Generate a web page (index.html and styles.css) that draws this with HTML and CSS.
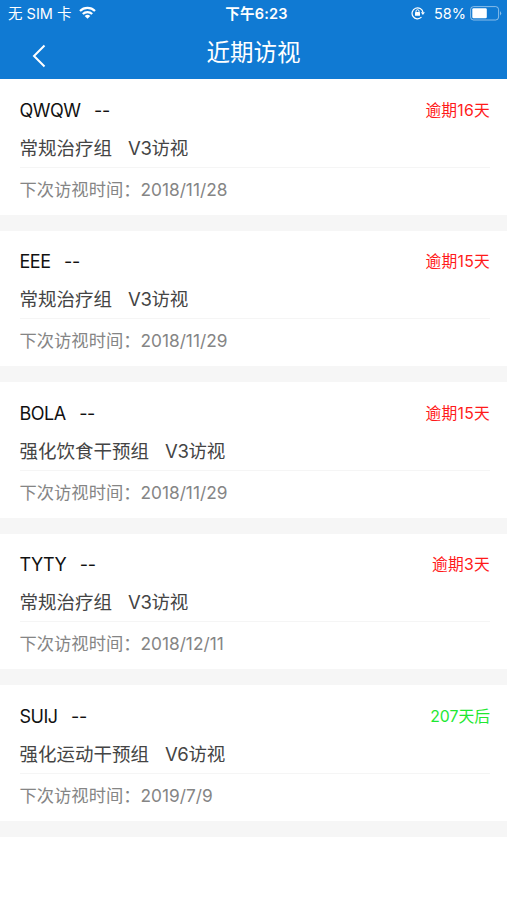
FILE: index.html
```html
<!DOCTYPE html>
<html lang="zh-CN">
<head>
<meta charset="utf-8">
<title>近期访视</title>
<link rel="stylesheet" href="styles.css">
</head>
<body>
<header>
  <div class="status">
    <div class="carrier"><span>无 SIM 卡</span>
      <svg width="17" height="13" viewBox="0 0 17 13"><g fill="none" stroke="#fff" stroke-width="2.2"><path d="M1 5a10.6 10.6 0 0 1 15 0"/><path d="M3.8 8a6.7 6.7 0 0 1 9.4 0"/></g><path d="M8.5 12.8L5.7 10a4 4 0 0 1 5.6 0z" fill="#fff"/></svg>
    </div>
    <div class="time">下午6:23</div>
    <div class="power">
      <svg class="lock" width="14" height="14" viewBox="0 0 14 14" fill="none" stroke="#fff" stroke-width="1.2"><path d="M10.5 11.2A5.5 5.5 0 1 1 12 6.4"/><path d="M9.9 6.2h4l-2 2.8z" fill="#fff" stroke="none"/><path d="M5 6.5V5.2a1.5 1.5 0 0 1 3 0v1.3" stroke-width="1"/><rect x="4" y="6" width="5" height="3.8" rx=".4" fill="#fff" stroke="none"/></svg>
      <span>58%</span>
      <svg class="battery" width="32" height="15" viewBox="0 0 32 15"><rect x=".6" y=".6" width="28" height="13.4" rx="3" fill="none" stroke="#fff" stroke-opacity=".5"/><rect x="2.3" y="2.3" width="14.5" height="10" rx="1.2" fill="#fff"/><path d="M30 5q2.4 2.3 0 4.6z" fill="#fff" opacity=".5"/></svg>
    </div>
  </div>
  <nav class="nav">
    <svg class="back" width="16" height="24" viewBox="0 0 16 24"><path d="M13.5 1.5L3 12 13.5 22.5" fill="none" stroke="#fff" stroke-width="2"/></svg>
    <h1>近期访视</h1>
  </nav>
</header>
<main>
  <section class="card"><div class="top"><span class="name">QWQW</span><span class="dash">--</span><span class="tag">逾期16天</span></div><div class="group"><span>常规治疗组</span><span>V3访视</span></div><div class="next"><span>下次访视时间：</span><span class="date">2018/11/28</span></div></section>
  <section class="card"><div class="top"><span class="name">EEE</span><span class="dash">--</span><span class="tag">逾期15天</span></div><div class="group"><span>常规治疗组</span><span>V3访视</span></div><div class="next"><span>下次访视时间：</span><span class="date">2018/11/29</span></div></section>
  <section class="card"><div class="top"><span class="name">BOLA</span><span class="dash">--</span><span class="tag">逾期15天</span></div><div class="group"><span>强化饮食干预组</span><span>V3访视</span></div><div class="next"><span>下次访视时间：</span><span class="date">2018/11/29</span></div></section>
  <section class="card"><div class="top"><span class="name">TYTY</span><span class="dash">--</span><span class="tag">逾期3天</span></div><div class="group"><span>常规治疗组</span><span>V3访视</span></div><div class="next"><span>下次访视时间：</span><span class="date">2018/12/11</span></div></section>
  <section class="card"><div class="top"><span class="name">SUIJ</span><span class="dash">--</span><span class="tag later">207天后</span></div><div class="group"><span>强化运动干预组</span><span>V6访视</span></div><div class="next"><span>下次访视时间：</span><span class="date">2019/7/9</span></div></section>
</main>
</body>
</html>
```
FILE: styles.css
```css
* { box-sizing: border-box; }
body { margin: 0; background: #fff; font-family: Inter, "Noto Sans CJK SC", sans-serif; }
header { height: 79px; background: #107ad3; color: #fff; }
.status { height: 27px; padding: 0 2px 0 8px; display: grid; grid-template-columns: 1fr auto 1fr; align-items: center; font-size: 14.5px; line-height: 27px; }
.carrier, .power { display: flex; align-items: center; gap: 8px; white-space: nowrap; }
.carrier svg { margin-bottom: 2px; }
.power { justify-content: flex-end; margin-right: 3px; gap: 4px; }
.lock { margin-right: 5px; margin-bottom: 1px; }
.time { font-weight: 600; letter-spacing: .25px; }
.nav { height: 52px; display: grid; grid-template-columns: 60px 1fr 60px; align-items: center; }
.back { margin: 6px 0 0 31px; }
h1 { margin: 0; font-size: 23.5px; font-weight: 400; line-height: 51px; height: 52px; text-align: center; }
.card { height: 151.5px; padding: 14.6px 17px 0 19.5px; border-bottom: 16px solid #f6f6f6; white-space: nowrap; }
.top { display: flex; height: 32px; line-height: 33px; font-size: 18px; color: #111; }
.name { letter-spacing: -.5px; }
.dash { margin-left: 13.5px; letter-spacing: -.3px; }
.tag { margin-left: auto; font-size: 15.8px; letter-spacing: .2px; color: #ff1a1a; }
.tag.later { color: #1fe832; letter-spacing: 0; }
.group { display: flex; gap: 16px; height: 42px; line-height: 44px; font-size: 18.5px; color: #444; border-bottom: 1px solid #f5f5f5; }
.group span + span { letter-spacing: -.3px; }
.next { display: flex; height: 43px; line-height: 44px; font-size: 17.3px; color: #858585; }
```
